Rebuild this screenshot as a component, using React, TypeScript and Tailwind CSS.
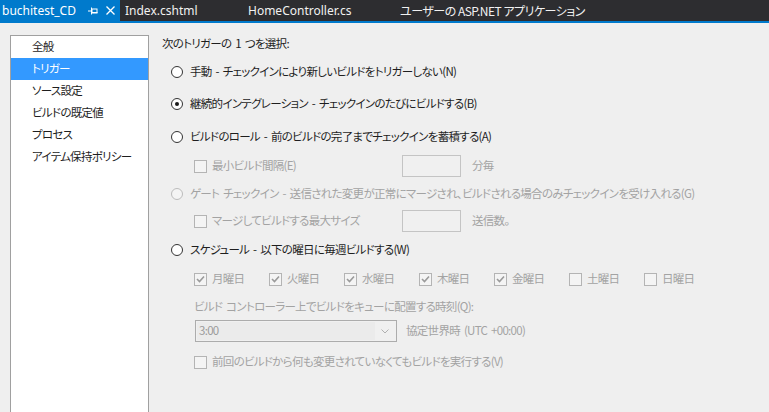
import React from "react";

const JP = "font-['Noto_Sans_CJK_JP','Noto_Sans',sans-serif] [font-feature-settings:'palt']";

function Radio({ label, checked, disabled }: { label: string; checked?: boolean; disabled?: boolean }) {
  return (
    <div className="flex items-center h-[20px] pl-[9px]">
      <div
        className={`w-[12px] h-[12px] rounded-full border flex items-center justify-center shrink-0 ${
          disabled ? "border-[#bcbcbc] bg-[#f4f4f4]" : "border-[#333333] bg-white"
        }`}
      >
        {checked && <div className="w-[4px] h-[4px] rounded-full bg-[#1a1a1a]" />}
      </div>
      <span className={`ml-[7px] whitespace-nowrap ${disabled ? "text-[#a3a3a3]" : "text-[#1e1e1e]"}`}>{label}</span>
    </div>
  );
}

function Check({ checked }: { checked?: boolean }) {
  return (
    <div className="w-[13px] h-[13px] border border-[#b4b4b4] bg-[#f4f4f4] flex items-center justify-center shrink-0">
      {checked && (
        <svg width="9" height="8" viewBox="0 0 9 8">
          <polyline points="1,4 3.5,6.5 8,1.5" fill="none" stroke="#9a9a9a" strokeWidth="1.6" />
        </svg>
      )}
    </div>
  );
}

function Day({ label, checked }: { label: string; checked?: boolean }) {
  return (
    <div className="flex items-center w-[75px] shrink-0">
      <Check checked={checked} />
      <span className="ml-[5px] text-[#a3a3a3]">{label}</span>
    </div>
  );
}

export default function App() {
  const nav = ["全般", "トリガー", "ソース設定", "ビルドの既定値", "プロセス", "アイテム保持ポリシー"];
  return (
    <div className={`w-[769px] h-[412px] overflow-hidden flex flex-col bg-[#efefef] text-[11.5px] tracking-[-0.7px] [word-spacing:2px] ${JP}`}>
      {/* Tab bar */}
      <div className="h-[21px] bg-[#2d2d30] flex items-stretch text-[12px] tracking-normal [word-spacing:0px] text-[#f1f1f1] font-['Noto_Sans',sans-serif] shrink-0">
        <div className="w-[120px] bg-[#007acc] flex items-center pl-[2px] text-white">
          <span>buchitest_CD</span>
          <svg className="ml-[12px]" width="10" height="8" viewBox="0 0 10 8">
            <line x1="0" y1="4" x2="3" y2="4" stroke="#ffffff" strokeWidth="1" />
            <line x1="3.5" y1="0.5" x2="3.5" y2="7.5" stroke="#ffffff" strokeWidth="1" />
            <rect x="4" y="2" width="5" height="4" fill="none" stroke="#ffffff" strokeWidth="1" />
            <line x1="4" y1="5.5" x2="9.5" y2="5.5" stroke="#ffffff" strokeWidth="1" />
          </svg>
          <svg className="ml-[8px]" width="9" height="9" viewBox="0 0 9 9">
            <path d="M0.5 0.5 L8.5 8.5 M8.5 0.5 L0.5 8.5" stroke="#ffffff" strokeWidth="1.3" />
          </svg>
        </div>
        <div className="flex items-center pl-[5px] w-[128px]">Index.cshtml</div>
        <div className="flex items-center w-[152px]">HomeController.cs</div>
        <div className={`flex items-center ${JP} tracking-[-0.5px]`}>ユーザーの ASP.NET アプリケーション</div>
      </div>
      <div className="h-[2px] bg-[#007acc] shrink-0" />

      {/* Content */}
      <div className="flex flex-1">
        <div className="ml-[10px] mt-[12px] w-[139px] border border-b-0 border-[#a0a0a0] bg-white flex flex-col shrink-0">
          {nav.map((n, i) => (
            <div
              key={n}
              className={`h-[22px] flex items-center pl-[21px] ${
                i === 1 ? "bg-[#3399ff] text-white" : "text-[#1e1e1e]"
              }`}
            >
              {n}
            </div>
          ))}
        </div>

        <div className="ml-[13px] pt-[11px] flex flex-col">
          <div className="h-[20px] flex items-center text-[#1e1e1e]">次のトリガーの 1 つを選択:</div>
          <div className="mt-[8px]">
            <Radio label="手動 - チェックインにより新しいビルドをトリガーしない(N)" />
          </div>
          <div className="mt-[12px]">
            <Radio label="継続的インテグレーション - チェックインのたびにビルドする(B)" checked />
          </div>
          <div className="mt-[13px]">
            <Radio label="ビルドのロール - 前のビルドの完了までチェックインを蓄積する(A)" />
          </div>
          <div className="mt-[8px] h-[22px] flex items-center pl-[32px]">
            <Check />
            <span className="ml-[5px] w-[190px] text-[#a3a3a3]">最小ビルド間隔(E)</span>
            <div className="w-[59px] h-[22px] border border-[#c4c4c4] bg-[#f0f0f0]" />
            <span className="ml-[11px] text-[#a3a3a3]">分毎</span>
          </div>
          <div className="mt-[7px]">
            <Radio
              label="ゲート チェックイン - 送信された変更が正常にマージされ、ビルドされる場合のみチェックインを受け入れる(G)"
              disabled
            />
          </div>
          <div className="mt-[6px] h-[22px] flex items-center pl-[32px]">
            <Check />
            <span className="ml-[5px] w-[190px] text-[#a3a3a3]">マージしてビルドする最大サイズ</span>
            <div className="w-[59px] h-[22px] border border-[#c4c4c4] bg-[#f0f0f0]" />
            <span className="ml-[11px] text-[#a3a3a3]">送信数。</span>
          </div>
          <div className="mt-[8px]">
            <Radio label="スケジュール - 以下の曜日に毎週ビルドする(W)" />
          </div>
          <div className="mt-[9px] h-[20px] flex items-center pl-[32px]">
            <Day label="月曜日" checked />
            <Day label="火曜日" checked />
            <Day label="水曜日" checked />
            <Day label="木曜日" checked />
            <Day label="金曜日" checked />
            <Day label="土曜日" />
            <Day label="日曜日" />
          </div>
          <div className="mt-[8px] h-[20px] flex items-center pl-[32px] text-[#a3a3a3]">
            ビルド コントローラー上でビルドをキューに配置する時刻(Q):
          </div>
          <div className="mt-[3px] h-[22px] flex items-center pl-[33px]">
            <div className="w-[202px] h-[22px] border border-[#acacac] bg-[#f0f0f0] flex items-stretch p-[1px] shrink-0">
              <div className="flex-1 bg-[#ebebeb] flex items-center pl-[2px] text-[#9a9a9a]">3:00</div>
              <div className="w-[20px] flex items-center justify-center">
                <svg width="8" height="5" viewBox="0 0 8 5">
                  <polyline points="0.5,0.5 4,4 7.5,0.5" fill="none" stroke="#b0b0b0" strokeWidth="1" />
                </svg>
              </div>
            </div>
            <span className="ml-[9px] text-[#a3a3a3]">協定世界時 (UTC +00:00)</span>
          </div>
          <div className="mt-[10px] h-[20px] flex items-center pl-[32px]">
            <Check />
            <span className="ml-[5px] text-[#a3a3a3]">前回のビルドから何も変更されていなくてもビルドを実行する(V)</span>
          </div>
        </div>
      </div>
    </div>
  );
}
